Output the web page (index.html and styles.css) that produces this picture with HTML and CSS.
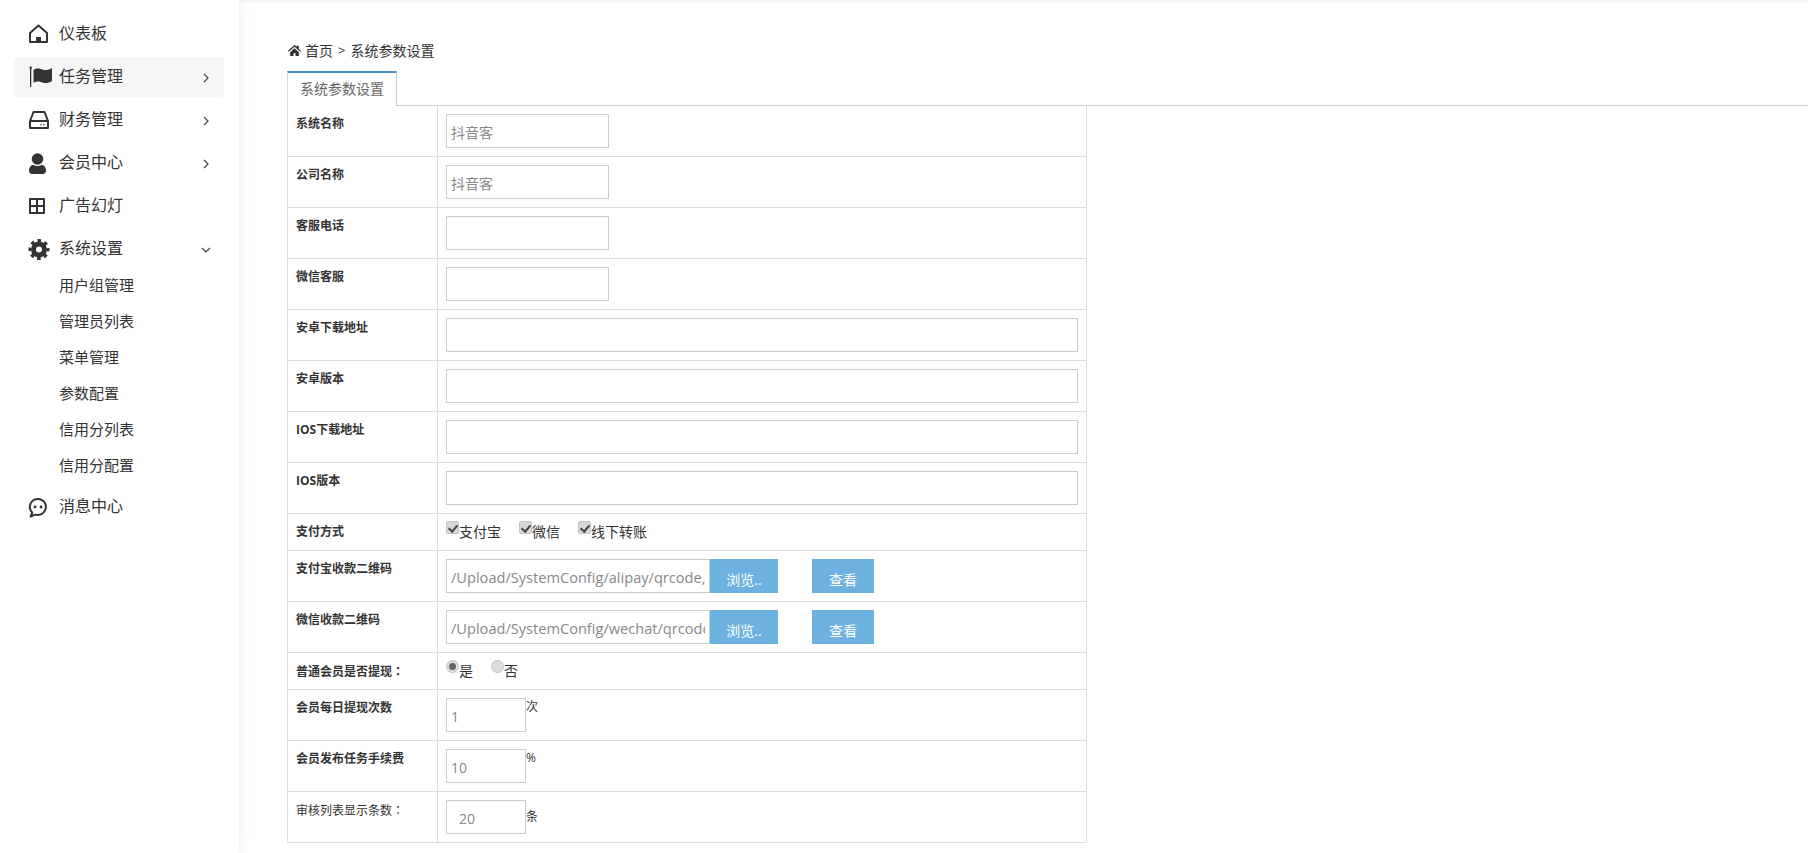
FILE: index.html
```html
<!DOCTYPE html>
<html lang="zh-CN">
<head>
<meta charset="utf-8">
<title>系统参数设置</title>
<link rel="stylesheet" href="styles.css">
</head>
<body>
<aside class="sidebar">
  <ul class="nav">
    <li class="nav-item">
      <svg class="ico" viewBox="0 0 24 24"><path class="line" d="M1 11 9.500 3.500 18 11v9H1z"/><path class="fill" d="M7 20v-5h5v5z"/></svg>
      <span class="nav-text">仪表板</span>
    </li>
    <li class="nav-item active">
      <svg class="ico" viewBox="0 0 24 24"><path class="fill" d="M1 3h1.300v19H1z"/><circle class="fill" cx="1.650" cy="2.800" r="1.200"/><path class="fill" d="M4.500 5c3.800-2.500 7-1 9.500-.3 2.800.7 6 .3 9-1.700v13c-3 2-6.200 2.400-9 1.700-2.500-.7-5.700-2.200-9.500.3z"/></svg>
      <span class="nav-text">任务管理</span>
      <svg class="chev" viewBox="0 0 10 10"><path d="M3 1l4 4-4 4"/></svg>
    </li>
    <li class="nav-item">
      <svg class="ico" viewBox="0 0 24 24"><path class="line" d="M4.500 4h11L19 13v7H1v-7zM1 13h18"/><circle class="fill" cx="12" cy="16.700" r=".8"/><circle class="fill" cx="15" cy="16.700" r=".8"/></svg>
      <span class="nav-text">财务管理</span>
      <svg class="chev" viewBox="0 0 10 10"><path d="M3 1l4 4-4 4"/></svg>
    </li>
    <li class="nav-item">
      <svg class="ico" viewBox="0 0 24 24"><circle class="fill" cx="8.500" cy="8" r="5.800"/><path class="fill" d="M0 19.500c0-3 1.500-5.200 4-5.800 2.700 1.800 6.300 1.800 9 0 2.500.6 4 2.800 4 5.800 0 2-1.300 3.500-3 3.500H3c-1.700 0-3-1.500-3-3.500z"/></svg>
      <span class="nav-text">会员中心</span>
      <svg class="chev" viewBox="0 0 10 10"><path d="M3 1l4 4-4 4"/></svg>
    </li>
    <li class="nav-item">
      <svg class="ico" viewBox="0 0 24 24"><path class="line" d="M1 5h14v14H1zM8 5v14M1 12h14"/></svg>
      <span class="nav-text">广告幻灯</span>
    </li>
    <li class="nav-item">
      <svg class="ico" viewBox="0 0 24 24"><circle class="gear-ring" cx="10" cy="12.500" r="5.500"/><circle class="gear-teeth" cx="10" cy="12.500" r="9"/></svg>
      <span class="nav-text">系统设置</span>
      <svg class="chev" viewBox="0 0 10 10"><path d="M1 3l4 4 4-4"/></svg>
    </li>
    <li class="sub-item sub-first">用户组管理</li>
    <li class="sub-item">管理员列表</li>
    <li class="sub-item">菜单管理</li>
    <li class="sub-item">参数配置</li>
    <li class="sub-item">信用分列表</li>
    <li class="sub-item">信用分配置</li>
    <li class="nav-item nav-last">
      <svg class="ico" viewBox="0 0 24 24"><path class="line" d="M1.500 21.500 3.300 17.700A8 8 0 1 1 6.500 19.600z"/><circle class="fill" cx="6" cy="12" r="1.400"/><circle class="fill" cx="12" cy="12" r="1.400"/></svg>
      <span class="nav-text">消息中心</span>
    </li>
  </ul>
</aside>
<main class="main">
  <div class="crumb">
    <svg class="crumb-home" viewBox="0 0 24 24"><path d="M12 2 0 12.500l1.500 1.700L12 5l10.500 9.200 1.500-1.700-4-3.500V3h-3.500v2zM4 15v7h6v-5h4v5h6v-7l-8-7z"/></svg>
    <span>首页</span><span class="crumb-sep">&gt;</span><span>系统参数设置</span>
  </div>
  <div class="tabs"><div class="tab">系统参数设置</div></div>
  <table class="form">
    <tr><th>系统名称</th><td><input class="in in-short" value="抖音客"></td></tr>
    <tr><th>公司名称</th><td><input class="in in-short" value="抖音客"></td></tr>
    <tr><th>客服电话</th><td><input class="in in-short"></td></tr>
    <tr><th>微信客服</th><td><input class="in in-short"></td></tr>
    <tr><th>安卓下载地址</th><td><input class="in in-wide"></td></tr>
    <tr><th>安卓版本</th><td><input class="in in-wide"></td></tr>
    <tr><th>IOS下载地址</th><td><input class="in in-wide"></td></tr>
    <tr><th>IOS版本</th><td><input class="in in-wide"></td></tr>
    <tr class="compact"><th>支付方式</th><td>
      <div class="opts">
        <label class="opt"><span class="box box-check"></span>支付宝</label>
        <label class="opt"><span class="box box-check"></span>微信</label>
        <label class="opt"><span class="box box-check"></span>线下转账</label>
      </div>
    </td></tr>
    <tr><th>支付宝收款二维码</th><td>
      <div class="upload">
        <input class="in in-file" value="/Upload/SystemConfig/alipay/qrcode,qrcode.png">
        <span class="btn btn-browse">浏览..</span>
        <span class="btn btn-view">查看</span>
      </div>
    </td></tr>
    <tr><th>微信收款二维码</th><td>
      <div class="upload">
        <input class="in in-file" value="/Upload/SystemConfig/wechat/qrcode/qrcode.png">
        <span class="btn btn-browse">浏览..</span>
        <span class="btn btn-view">查看</span>
      </div>
    </td></tr>
    <tr class="compact"><th>普通会员是否提现<span class="cn-colon" lang="zh-TW">：</span></th><td>
      <div class="opts">
        <label class="opt"><span class="box box-radio on"></span>是</label>
        <label class="opt"><span class="box box-radio"></span>否</label>
      </div>
    </td></tr>
    <tr><th>会员每日提现次数</th><td><div class="num"><input class="in in-num" value="1"><span class="unit">次</span></div></td></tr>
    <tr><th>会员发布任务手续费</th><td><div class="num"><input class="in in-num" value="10"><span class="unit">%</span></div></td></tr>
    <tr><th class="plain">审核列表显示条数<span class="cn-colon" lang="zh-TW">：</span></th><td><div class="num num-mid"><input class="in in-num in-indent" value="20"><span class="unit">条</span></div></td></tr>
  </table>
</main>
</body>
</html>
```

FILE: styles.css
```css
* { box-sizing: border-box; }
html, body { height: 100%; }
body {
  margin: 0;
  display: flex;
  background: #fff;
  color: #333;
  font-family: "Open Sans", "Noto Sans CJK SC", sans-serif;
  font-size: 14px;
  overflow: hidden;
}
.sidebar {
  width: 239px;
  flex: none;
  height: 853px;
  background: #fff;
  box-shadow: 0 0 12px rgba(0, 0, 0, .09);
  position: relative;
  z-index: 2;
  padding: 14px 15px 0 14px;
}
.nav { list-style: none; margin: 0; padding: 0; }
.nav-item {
  height: 40px;
  margin-bottom: 3px;
  display: flex;
  align-items: center;
  padding-left: 15px;
  border-radius: 4px;
  font-size: 16px;
  color: #333;
  position: relative;
}
.nav-item.active { background: #f6f6f6; }
.nav-last { margin-top: 4px; }
.nav-text { margin-left: 6px; position: relative; top: -2px; }
.ico { width: 24px; height: 24px; flex: none; overflow: visible; }
.line { fill: none; stroke: #333; stroke-width: 2; stroke-linejoin: round; }
.fill { fill: #333; }
.gear-ring { fill: none; stroke: #333; stroke-width: 5; }
.gear-teeth {
  fill: none;
  stroke: #333;
  stroke-width: 3;
  stroke-dasharray: 3.6 3.469;
  stroke-dashoffset: 1.8;
}
.chev {
  width: 10px;
  height: 10px;
  position: absolute;
  left: 187px;
  top: 16px;
  fill: none;
  stroke: #444;
  stroke-width: 1.2;
}
.sub-item {
  height: 36px;
  line-height: 36px;
  padding-left: 45px;
  font-size: 15px;
  color: #333;
}
.sub-first { margin-top: -5px; }
.main {
  flex: 1;
  min-width: 0;
  position: relative;
  padding: 38px 0 0 48px;
  box-shadow: inset 0 5px 5px -4px rgba(0, 0, 0, .08);
}
.crumb {
  height: 24px;
  display: flex;
  align-items: center;
  gap: 4px;
  font-size: 14px;
  color: #333;
  margin-left: 1px;
}
.crumb-home { width: 13px; height: 13px; fill: #333; flex: none; }
.crumb-sep { font-size: 13px; margin: 0 1px; }
.tabs {
  margin-top: 9px;
  height: 35px;
  border-bottom: 1px solid #c6ced5;
}
.tab {
  width: 110px;
  height: 35px;
  border-top: 2px solid #4a8fc4;
  border-left: 1px solid #d4dae0;
  border-right: 1px solid #c6ced5;
  background: #fff;
  color: #666;
  font-size: 14px;
  line-height: 32px;
  text-align: center;
}
.form {
  border-collapse: collapse;
  width: 800px;
  table-layout: fixed;
  border: 1px solid #ddd;
  border-top: 0;
}
.form tr { height: 51px; }
.form tr:first-child { height: 50px; }
.form tr.compact { height: 37px; }
.form th, .form td {
  border: 1px solid #ddd;
  border-top: 0;
  padding: 8px;
  vertical-align: top;
}
.form tr + tr th, .form tr + tr td { border-top: 1px solid #ddd; }
.form th {
  width: 150px;
  text-align: left;
  font-size: 12px;
  font-weight: 700;
  line-height: 19px;
  color: #333;
}
.form th.plain { font-weight: 400; }
.cn-colon { font-family: "Noto Sans CJK TC", sans-serif; }
.in {
  display: block;
  height: 34px;
  border: 1px solid #ccc;
  background: #fff;
  color: #888;
  font-family: "Open Sans", "Noto Sans CJK SC", sans-serif;
  font-size: 14px;
  padding: 2px 4px 0;
  outline: 0;
  border-radius: 0;
}
.in-short { width: 163px; }
.in-wide { width: 632px; }
.in-file { width: 264px; flex: none; font-size: 14.6px; }
.in-num { width: 80px; flex: none; }
.in-indent { padding-left: 12px; }
.upload { display: flex; }
.btn {
  height: 34px;
  background: #6cb1e0;
  color: #fff;
  font-size: 14px;
  text-align: center;
  line-height: 42px;
  flex: none;
}
.btn-browse { width: 68px; }
.btn-view { width: 62px; margin-left: 34px; }
.num { display: flex; align-items: flex-start; }
.num-mid { align-items: center; }
.unit { font-size: 12px; line-height: 18px; }
.opts { display: flex; height: 20px; }
.opt {
  display: flex;
  align-items: flex-start;
  line-height: 20px;
  margin-right: 18px;
  font-size: 14px;
  color: #333;
}
.box {
  width: 13px;
  height: 13px;
  flex: none;
  background: #d8d8d8;
  border: 1px solid #c4c4c4;
  position: relative;
  top: -1px;
}
.box-check { border-radius: 2px; }
.box-check::after {
  content: "";
  position: absolute;
  left: 3px;
  top: 1px;
  width: 4px;
  height: 7px;
  border: solid #444;
  border-width: 0 2px 2px 0;
  transform: rotate(40deg);
}
.box-radio { border-radius: 50%; background: #dcdcdc; }
.box-radio.on::after {
  content: "";
  position: absolute;
  left: 2px;
  top: 2px;
  width: 7px;
  height: 7px;
  border-radius: 50%;
  background: #666;
}
```
